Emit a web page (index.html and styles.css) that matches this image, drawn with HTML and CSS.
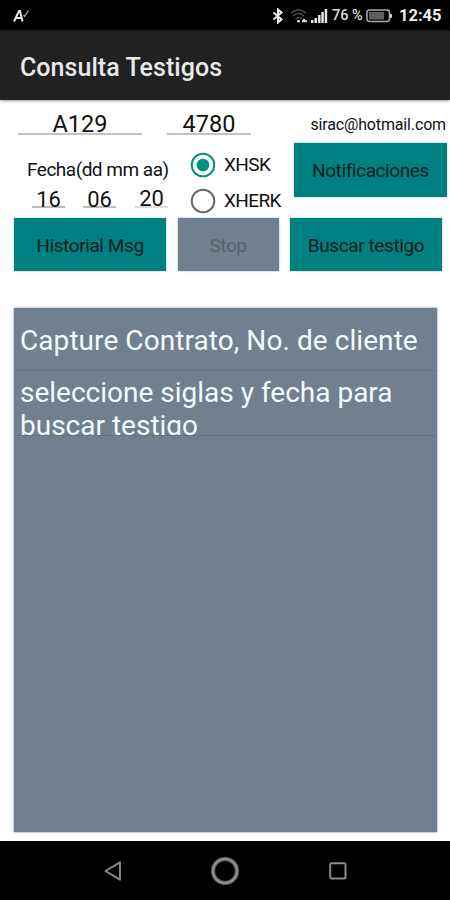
FILE: index.html
```html
<!DOCTYPE html>
<html lang="es">
<head>
<meta charset="utf-8">
<title>Consulta Testigos</title>
<link rel="stylesheet" href="styles.css">
</head>
<body>
<div class="status">
  <svg class="app-mark" width="17" height="14" viewBox="0 0 17 14" fill="none" stroke="#e8e8e8"><path d="M1 12.500 6 2h1l2.500 10.500M3 9h6" stroke-width="2"/><path d="m10.500 6 1 1.500L15.500 1.500" stroke-width="1.200" stroke="#bbb"/></svg>
  <svg class="bluetooth" width="12" height="16" viewBox="0 0 12 16" fill="none" stroke="#eee" stroke-width="2"><path d="m1.500 4.500 8 7L6 14.500v-13l3.500 3-8 7"/></svg>
  <svg class="wifi" width="18" height="16" viewBox="0 0 18 16" fill="none" stroke="#505050" stroke-width="1.400"><path d="M1 5Q8.500-1.500 16 5M3 8q5.500-5 11 0M5.500 11q3-3 6 0"/><path d="M7 13.300h3M12 13.300h5M14 11v3" stroke="#ddd" stroke-width="2"/></svg>
  <svg class="signal" width="17" height="14" viewBox="0 0 17 14" fill="#e4e4e4"><path d="M0 11h2.500v3H0zM3.500 9H6v5H3.500zM7 6h2.500v8H7zM10.300 3h2.500v11h-2.500zM13.700 0h2.500v14h-2.500z"/></svg>
  <span class="percent">76 %</span>
  <svg class="battery" width="27" height="14" viewBox="0 0 27 14"><rect x="1" y="1" width="22.500" height="11.500" rx="2.500" fill="none" stroke="#aaa" stroke-width="1.500"/><path d="M3 3h15v7.500H3z" fill="#606060"/><path d="M24 4.500 26 5.500v3l-2 1z" fill="#ccc"/></svg>
  <span class="clock">12:45</span>
</div>
<header class="title-bar"><h1>Consulta Testigos</h1></header>
<main>
  <div class="accounts">
    <div class="field contract"><span>A129</span></div>
    <div class="field client"><span>4780</span></div>
    <span class="email">sirac@hotmail.com</span>
  </div>
  <div class="options">
    <div class="date">
      <div class="date-label">Fecha(dd mm aa)</div>
      <div class="date-fields">
        <div class="field day">16</div>
        <div class="field month">06</div>
        <div class="field year"><span>20</span></div>
      </div>
    </div>
    <div class="stations">
      <div class="radio"><svg width="26" height="26" viewBox="0 0 26 26"><circle cx="13" cy="13" r="11.300" fill="none" stroke="#009180" stroke-width="2"/><circle cx="13" cy="13" r="6.300" fill="#009180"/></svg><span>XHSK</span></div>
      <div class="radio"><svg width="26" height="26" viewBox="0 0 26 26"><circle cx="13" cy="13" r="11.300" fill="none" stroke="#666" stroke-width="1.900"/></svg><span>XHERK</span></div>
    </div>
    <div class="button notify">Notificaciones</div>
  </div>
  <div class="actions">
    <div class="button">Historial Msg</div>
    <div class="button disabled">Stop</div>
    <div class="button">Buscar testigo</div>
  </div>
  <div class="list">
    <div class="item first">Capture Contrato, No. de cliente</div>
    <div class="item second">seleccione siglas y fecha para<br>buscar testigo</div>
  </div>
</main>
<nav class="nav">
  <svg width="18" height="22" viewBox="0 0 18 22"><path d="M17 2.300v17.400L2.500 11z" fill="none" stroke="#888" stroke-width="2" stroke-linejoin="round"/></svg>
  <svg width="30" height="30" viewBox="0 0 30 30"><circle cx="15" cy="15" r="12" fill="none" stroke="#686868" stroke-width="4"/><circle cx="15" cy="15" r="12" fill="none" stroke="#999" stroke-width="1.500"/></svg>
  <svg width="18" height="18" viewBox="0 0 18 18"><rect x="1.200" y="1.200" width="15.300" height="15.300" rx="1" fill="none" stroke="#888" stroke-width="2"/></svg>
</nav>
</body>
</html>
```
FILE: styles.css
```css
* { box-sizing: border-box; }
body { margin: 0; width: 450px; height: 900px; overflow: hidden; display: flex; flex-direction: column; background: #fff; color: #111; font-family: Roboto, sans-serif; white-space: nowrap; }
svg { display: block; flex: none; }

.status { height: 31px; flex: none; display: flex; align-items: center; padding: 0 10px 0 13px; background: #000; color: #ededed; }
.bluetooth { margin-left: auto; }
.wifi { margin-left: 6px; }
.signal { margin-left: 3px; }
.percent { margin-left: 4px; width: 32px; font-size: 14.500px; font-weight: 500; color: #ddd; }
.battery { margin-left: 2px; }
.clock { margin-left: 6px; width: 41px; font-size: 16.500px; font-weight: 700; }

.title-bar { height: 69px; flex: none; display: flex; align-items: center; padding: 5px 20px 0; background: #212121; box-shadow: 0 1px 3px #999; }
h1 { margin: 0; color: #e8e8e8; font-size: 25px; line-height: 30px; font-weight: 500; letter-spacing: .05px; }

main { height: 741px; flex: none; }
.field { display: flex; justify-content: center; border-bottom: 2px solid #c4c4c4; }
.accounts { height: 43px; display: flex; align-items: flex-start; padding: 12px 4px 0 18px; }
.accounts .field { height: 23px; font-size: 23.500px; line-height: 25px; }
.contract { width: 124px; }
.client { width: 84px; margin-left: 25px; }
.email { margin-left: auto; font-size: 16px; line-height: 26px; letter-spacing: -.15px; }

.options { height: 75px; display: flex; align-items: flex-start; padding-right: 3px; }
.date { width: 190px; padding: 15px 0 0 27px; }
.date-label { font-size: 19px; line-height: 23px; letter-spacing: -.5px; }
.date-fields { display: flex; gap: 18px; padding: 6px 0 0 5px; }
.date-fields .field { width: 33px; height: 21px; font-size: 22px; line-height: 25px; border-color: #bbb; }
.date-fields .year { margin-left: 1px; border-color: #ddd; line-height: 23px; }
.stations { display: flex; flex-direction: column; gap: 10px; padding-top: 9px; }
.radio { height: 26px; display: flex; align-items: center; gap: 8px; font-size: 19px; line-height: 28px; letter-spacing: -.6px; }
.button { height: 53px; display: flex; align-items: center; justify-content: center; padding-top: 1px; background: #008080; color: #071c1c; font-size: 19px; letter-spacing: -.4px; box-shadow: 0 0 2px #a6b8bd; }
.notify { width: 153px; height: 54px; margin-left: auto; }

.actions { display: grid; grid-template-columns: 152px 101px 152px; column-gap: 11.500px; padding: 0 8px 0 14px; }
.button.disabled { background: #708090; color: #56636f; }

.list { width: 423px; height: 524px; margin: 37px 0 0 14px; padding: 0 1px; background: #708090; color: #f5faff; box-shadow: 0 0 2px #69727c; }
.item { padding-left: 5px; overflow: hidden; border-bottom: 1px solid #647383; font-size: 28px; letter-spacing: .07px; }
.first { height: 63px; line-height: 65px; }
.second { height: 65px; padding-top: 5px; line-height: 33px; letter-spacing: 0; }

.nav { height: 59px; flex: none; display: flex; align-items: center; justify-content: space-between; padding: 0 103px; background: #000; }
```
